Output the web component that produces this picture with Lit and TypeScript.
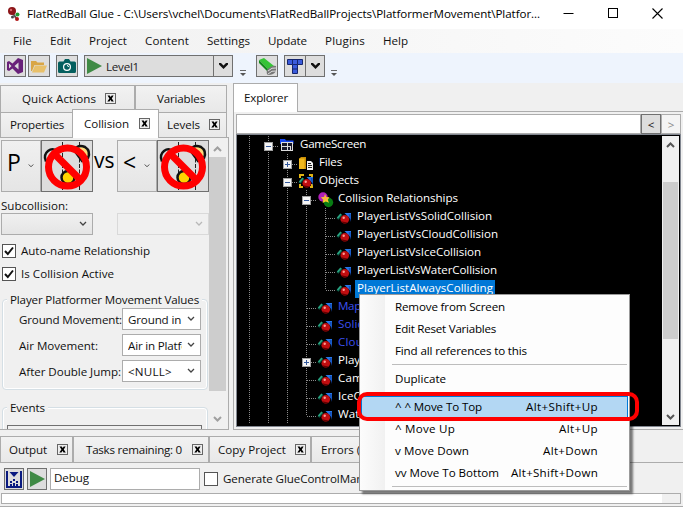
import { LitElement, html, css, svg, nothing } from "lit";
import { customElement, property } from "lit/decorators.js";

/** Text label that spreads its letters to fill an exact advance width. */
@customElement("fit-label")
class FitLabel extends LitElement {
  @property({ type: Number }) w = 0;
  @property() text = "";
  static styles = css`
    :host { display: inline-block; white-space: pre; flex: none; }
  `;
  updated() {
    const s = this.renderRoot.querySelector("span") as HTMLElement;
    s.style.letterSpacing = "0px";
    if (this.w) s.style.letterSpacing = (this.w - s.getBoundingClientRect().width) / this.text.length + "px";
  }
  render() {
    return html`<span>${this.text}</span>`;
  }
}

const t = (text: string, w = 0) => html`<fit-label .text=${text} .w=${w}></fit-label>`;

const chev = (c = "#444", w = 8) => html`<svg class="chev" width=${w} height="6" viewBox="0 0 8 6"><path d="M1 1L4 4L7 1" fill="none" stroke=${c} stroke-width="1.3"/></svg>`;
const arrow = (up: boolean, c: string) => html`<svg width="9" height="8" viewBox="0 0 9 8"><path d=${up ? "M1 6L4.500 2.500L8 6" : "M1 2L4.500 5.500L8 2"} fill="none" stroke=${c} stroke-width="2"/></svg>`;
const closeBox = html`<svg class="close" width="11" height="11" viewBox="0 0 11 11"><rect x=".5" y=".5" width="10" height="10" fill="#eee" stroke="#666"/><path d="M2.500 2.500h2.200l1 1.600 1-1.600h1.900L6.800 5.500l2 3H6.500l-1-1.700-1 1.700H2.300l2.100-3z" fill="#000"/></svg>`;
const play = html`<svg width="16" height="16" viewBox="0 0 16 16"><path d="M1 0L16 8L1 16z" fill="#3f8a45"/></svg>`;
const overflow = html`<svg class="ovf" width="6" height="7" viewBox="0 0 6 7"><path d="M0 .5h6" stroke="#666"/><path d="M0 3h6L3 6z" fill="#555"/></svg>`;

const banned = html`<svg width="46" height="50" viewBox="0 0 46 50">
  <path d="M18.500 1V50M35.500 1V50" stroke="#222" stroke-dasharray="4 1.500"/>
  <path d="M2 20.500Q-1 14 4 10Q9 6 14 11" fill="#ddd" stroke="#111" stroke-width="2.500"/>
  <path d="M30 9Q34 3 41 6Q47 10 44 17L38 20z" fill="#ffd97a" stroke="#111" stroke-width="2.500"/>
  <circle cx="24" cy="36.500" r="6.500" fill="#ffd500" stroke="#111" stroke-width="2.500"/>
  <circle cx="23.500" cy="26" r="19" fill="none" stroke="#f00" stroke-width="7"/>
  <path d="M10 12.500L37 39.500" stroke="#f00" stroke-width="7"/></svg>`;

const ballIcon = svg`
  <path d="M.5 9L4.500 4.500" stroke="#0b5540" stroke-width="2.600"/><path d="M.5 8L4 4" stroke="#2aa583" stroke-width="1.600"/>
  <path d="M7.500 3H14V9.500z" fill="#2878e8"/><path d="M11.500 4H13.700V12z" fill="#144fb8"/>
  <circle cx="7.800" cy="9.300" r="4.300" fill="#c00d10"/><path d="M4 11.300a4.300 4.300 0 0 0 6.500 1.300z" fill="#620000"/><circle cx="6.700" cy="7.800" r="1.200" fill="#ff9c93"/>`;
const icons: Record<string, unknown> = {
  ball: ballIcon,
  screen: svg`<path d="M0 1h5l1 1.500h7.500V6H0z" fill="#1747ef"/><rect x="1.500" y="4.500" width="11" height="8" fill="#16162a" stroke="#ddd"/><path d="M2 8.500h5M7.500 5v8M8 8.500h3M10.500 8v5" stroke="#ddd"/>`,
  files: svg`<path d="M0 3l2-2h5v12H0z" fill="#c98e05"/><path d="M0 2.500h5.500V13H0z" fill="#f0b81e"/><path d="M8 5h4l2 2v7H8z" fill="#f2f2f2"/><path d="M9 7.500h3M9 9.500h4M9 11.500h4" stroke="#222"/>`,
  objects: svg`<path d="M1 4V1h4M10 1h3v3M1 10v3h3M11 13h2v-3" fill="none" stroke="#e0b414" stroke-width="2"/>${ballIcon}`,
  rel: svg`<circle cx="5" cy="5" r="4.700" fill="#b01fb8"/><circle cx="10.500" cy="10.500" r="4.700" fill="#087c13"/><path d="M7 2l1.300 3 3.200.2-1.700 2.600 1.200 3-3.200-1.200-3.200 1.400.7-3.300-2.400-2.500 3.200-.2z" fill="#f3cb29"/><circle cx="7.300" cy="6.500" r="1.800" fill="#ffa84d"/>`,
};

/** One glyph per 19px tree column: | line, L last child, T child, + collapsed, - expanded. */
const cell = (k: string) => {
  const dash = (d: string) => svg`<path d=${d} stroke="#8a8a8a" stroke-dasharray="1 1" fill="none" shape-rendering="crispEdges"/>`;
  const box = k === "+" || k === "-";
  return html`<svg class="cell" width="19" height="18" viewBox="0 0 19 18">
    ${k === "|" || k === "T" || box ? dash("M9.500 0V18") : nothing}
    ${k === "L" ? dash("M9.500 0V10") : nothing}
    ${k !== "|" ? dash("M10 10.500H20") : nothing}
    ${box ? svg`<rect x="5.500" y="6.500" width="8" height="8" fill="#f4f4f4" stroke="#a0a0a0"/><path d=${k === "+" ? "M7 10.500h5M9.500 8v5" : "M7 10.500h5"} stroke="#33589c"/>` : nothing}
  </svg>`;
};

const rows: [string, string, string, number, string?][] = [
  ["|-", "screen", "GameScreen", 66],
  ["||+", "files", "Files", 23],
  ["||-", "objects", "Objects", 40],
  ["|||-", "rel", "Collision Relationships", 120],
  ["||||T", "ball", "PlayerListVsSolidCollision", 135],
  ["||||T", "ball", "PlayerListVsCloudCollision", 141],
  ["||||T", "ball", "PlayerListVsIceCollision", 124],
  ["||||T", "ball", "PlayerListVsWaterCollision", 140],
  ["||||L", "ball", "PlayerListAlwaysColliding", 136, "sel"],
  ["|||T", "ball", "Map", 23, "blue"],
  ["|||T", "ball", "SolidCollision", 73, "blue"],
  ["|||T", "ball", "CloudCollision", 79, "blue"],
  ["|||+", "ball", "PlayerList", 52],
  ["|||T", "ball", "Camera", 43],
  ["|||T", "ball", "IceCollision", 62],
  ["|||L", "ball", "WaterCollision", 78],
];

const menuItems: ([string, number, string?, number?, boolean?] | null)[] = [
  ["Remove from Screen", 110], ["Edit Reset Variables", 101], ["Find all references to this", 132], null,
  ["Duplicate", 51], null,
  ["^ ^ Move To Top", 87, "Alt+Shift+Up", 72, true], ["^ Move Up", 60, "Alt+Up", 39],
  ["v Move Down", 74, "Alt+Down", 55], ["vv Move To Bottom", 104, "Alt+Shift+Down", 87], null,
];

@customElement("app-root")
class AppRoot extends LitElement {
  static styles = css`
    :host { display: flex; flex-direction: column; position: relative; width: 683px; height: 507px; overflow: hidden;
      background: #f0f0f0; color: #111; font: 11.6px "Open Sans", "Noto Sans", sans-serif; }
    * { box-sizing: border-box; }
    svg { display: block; flex: none; overflow: visible; }
    .title { height: 29px; background: #fff; display: flex; align-items: center; padding: 0 20px 2px 7px; gap: 6px; flex: none; color: #000; }
    .title .win { margin-left: auto; display: flex; gap: 34px; }
    .menu { height: 24px; flex: none; display: flex; align-items: center; gap: 18px; padding: 0 13px 1px; background: linear-gradient(90deg, #f0f0f0, #fcfcfc); }
    .tools { height: 30px; flex: none; display: flex; padding: 2px 4px; background: #eef4fd; align-items: flex-start; }
    .tb { width: 22px; height: 22px; border: 1px solid #707070; background: #ddd; display: flex; align-items: center; justify-content: center; flex: none; }
    .tb.play { width: 130px; justify-content: flex-start; gap: 4px; padding-left: 1px; color: #222; }
    .tb.dd { width: 19px; border-left: 0; }
    .ovf { margin-top: 15px; }
    .main { display: flex; height: 351px; flex: none; }
    .left { width: 229px; display: flex; flex-direction: column; padding-top: 2px; margin-right: 4px; flex: none; }
    .tabs { display: flex; flex: none; }
    .tab { height: 27px; border: 1px solid #acacac; border-bottom: 0; background: linear-gradient(#f2f2f2, #e8e8e8); display: flex; align-items: center; flex: none; padding-bottom: 1px; }
    .low .tab { height: 25px; padding-bottom: 1px; }
    .low .tab.on { background: #fff; height: 29px; margin: -3px -1px -1px; position: relative; padding-bottom: 2px; }
    .lbody { flex: none; height: 293px; width: 229px; border: solid #acacac; border-width: 1px 1px 1px 0; display: flex; overflow: hidden; padding-right: 1px; }
    .lcol { width: 209px; padding: 2px 0 0 1px; overflow: hidden; display: flex; flex-direction: column; flex: none; }
    .sb { width: 17px; display: flex; flex-direction: column; align-items: center; }
    .sb .thumb { background: #cdcdcd; }
    .vs { display: flex; height: 52px; flex: none; }
    .btn { border: 1px solid #acacac; background: linear-gradient(#f0f0f0, #e5e5e5); display: flex; align-items: center; flex: none; }
    .big { width: 40px; height: 52px; font-size: 23px; padding-left: 5px; justify-content: space-between; padding-right: 6px; color: #000; }
    .big .clip { width: 13px; overflow: hidden; margin-top: -9px; }
    .img { width: 52px; height: 52px; border-color: #707070; background: #ddd; justify-content: center; }
    .vst { width: 24px; font-size: 21px; line-height: 40px; color: #000; padding-left: 1px; flex: none; }
    .sub { height: 21px; line-height: 28px; flex: none; }
    .pair { display: flex; gap: 24px; flex: none; height: 22px; }
    .pair .btn { width: 92px; justify-content: flex-end; padding-right: 5px; }
    .pair .off { border-color: #d9d9d9; background: #f0f0f0; width: 92px; }
    .chk { display: flex; align-items: center; gap: 5px; height: 23px; flex: none; }
    .cb { width: 14px; height: 14px; border: 1px solid #555; background: #fff; flex: none; }
    .group { margin: 0 1px; border: 1px solid #d5dfe5; border-radius: 4px; box-shadow: inset 0 0 0 1px #fff; flex: none; height: 91px; display: flex; flex-direction: column; gap: 4px; padding: 0 6px 0 14px; }
    .legend { height: 4px; margin: -2px 0 2px -10px; display: flex; align-items: center; flex: none; }
    .legend fit-label { background: #f0f0f0; padding: 0 3px; line-height: 16px; }
    .fld { display: flex; height: 22px; align-items: center; justify-content: space-between; flex: none; }
    .sel2 { width: 79px; height: 22px; border: 1px solid #acacac; background: #fff; display: flex; align-items: center; padding: 0 5px; flex: none; justify-content: space-between; }
    .sel2 .clip { width: 54px; overflow: hidden; display: flex; }
    .inner { height: 8px; border: 1px solid #707070; border-bottom: 0; margin: 9px -1px 0 -10px; flex: none; }
    .ex { width: 450px; display: flex; flex-direction: column; flex: none; height: 347px; }
    .extab { width: 65px; height: 29px; border: 1px solid #acacac; border-bottom: 0; background: #fff; display: flex; align-items: center; padding: 0 0 1px 10px; flex: none; position: relative; }
    .exbody { margin-top: -1px; height: 319px; border: 1px solid #acacac; border-right: 0; padding: 2px 1px 1px 2px; flex: none; }
    .search { display: flex; height: 20px; width: 445px; }
    .search .in { flex: 1; background: #fff; border: 1px solid #acacac; }
    .search .btn { width: 20px; justify-content: center; }
    .search .nav { border-color: #707070; background: #ddd; }
    .search .dis { color: #8a8a8a; background: #f4f4f4; }
    .tree { width: 445px; height: 293px; background: #000; border: 1px solid #828790; display: flex; color: #fff; padding-top: 1px; }
    .rows { width: 425px; padding-left: 3px; overflow: hidden; flex: none; }
    .row { display: flex; height: 18px; align-items: center; }
    .row .ic { margin: 2px 4px 0 2px; }
    .row .lab { line-height: 16px; height: 18px; }
    .row .sel { background: #0078d7; padding: 0 2px; margin-left: -2px; }
    .row .blue { color: #3c50f0; }
    .tree .sb { background: #f0f0f0; height: 289px; }
    .bot { flex: none; height: 73px; display: flex; flex-direction: column; padding-top: 2px; }
    .bot .tab { height: 26px; }
    .bbody { border-top: 1px solid #acacac; height: 45px; border-bottom: 1px solid #acacac; }
    .brow { display: flex; height: 22px; margin: 5px 0 0 4px; }
    .brow .in { width: 150px; border: 1px solid #acacac; background: #fff; margin: 0 4px 0 3px; padding-left: 3px; line-height: 18px; }
    .out { margin: 3px 2px 0 1px; border: 1px solid #acacac; background: #fff; height: 11px; display: flex; justify-content: flex-end; }
    .out i { width: 18px; background: #f0f0f0; }
    .ctx { position: absolute; left: 359px; top: 294px; width: 271px; height: 197px; border: 1px solid #9a9a9a; background: linear-gradient(90deg, #fcfcfc, #f1f1f1 25px, #fdfdfd 25px); box-shadow: 3px 3px 2px rgba(0,0,0,.5); padding: 1px 1px; color: #000; display: flex; flex-direction: column; }
    .mi { height: 22px; display: flex; align-items: center; justify-content: space-between; padding: 0 29px 2px 33px; border: 1px solid transparent; flex: none; }
    .mi.hot { border-color: #0078d7; background: #b3d7f3; }
    .sep { height: 1px; background: #bdbdbd; margin: 2px 1px 3px 31px; flex: none; }
    .ring { position: absolute; left: 357px; top: 392px; width: 282px; height: 29px; border: 4px solid #f00; border-radius: 10px; }
  `;

  render() {
    return html`
      <div class="title">
        <svg width="14" height="14" viewBox="0 0 14 14"><path d="M5 5L9 11" stroke="#555" stroke-width="2"/><circle cx="5" cy="4" r="4" fill="#8c1518"/><circle cx="4" cy="3" r="1.200" fill="#d8676a"/><circle cx="10.500" cy="7.500" r="2" fill="#1f9a30"/><circle cx="5.500" cy="10" r="1.500" fill="#444"/><circle cx="10" cy="12" r="2" fill="#b01515"/></svg>
        ${t("FlatRedBall Glue - C:\\Users\\vchel\\Documents\\FlatRedBallProjects\\PlatformerMovement\\Platfor...", 513)}
        <div class="win">
          <svg width="11" height="11" viewBox="0 0 11 11"><path d="M.5 5.500h10" stroke="#000"/></svg>
          <svg width="10" height="10" viewBox="0 0 10 10"><rect x=".5" y=".5" width="9" height="9" fill="none" stroke="#000"/></svg>
          <svg width="11" height="11" viewBox="0 0 11 11"><path d="M.5 .5l10 10M10.500 .5l-10 10" stroke="#000" stroke-width="1.100"/></svg>
        </div>
      </div>
      <div class="menu">
        ${t("File", 19)}${t("Edit", 21)}${t("Project", 38)}${t("Content", 44)}${t("Settings", 43)}${t("Update", 39)}${t("Plugins", 40)}${t("Help", 25)}
      </div>
      <div class="tools">
        <div class="tb"><svg width="16" height="16" viewBox="0 0 16 16"><path fill-rule="evenodd" d="M11 0l5 2v12l-5 2-5.500-5.500L2 13l-2-1V4l2-1 3.500 2.500zM11.500 4.500L7.500 8l4 3.500zM2 5.500v5L4.500 8z" fill="#68217a"/></svg></div>
        <div class="tb" style="margin-left:2px"><svg width="16" height="13" viewBox="0 0 16 13"><path d="M0 1h5l1.500 1.500H13V5H3.500L1 11H0z" fill="#d9a646"/><path d="M4 5.500h12L13 12.500H1z" fill="#e8c06a"/></svg></div>
        <div class="tb" style="margin-left:6px"><svg width="18" height="14" viewBox="0 0 18 14"><path d="M1.500 2.500h4L7 0h4l1.500 2.500h4Q18 2.500 18 4v8.500Q18 14 16.500 14h-15Q0 14 0 12.500V4q0-1.500 1.500-1.500z" fill="#045f5f"/><circle cx="9" cy="8" r="4" fill="#fff"/><circle cx="9" cy="8" r="2.800" fill="#045f5f"/><path d="M9 6.500q1.500 0 1.500 1.500" stroke="#fff" fill="none"/></svg></div>
        <div class="tb play" style="margin-left:6px">${play}${t("Level1", 33)}</div>
        <div class="tb dd"><svg width="9" height="6" viewBox="0 0 9 6"><path d="M0 0h2l2.500 2.500L7 0h2v1.500L4.500 6 0 1.500z" fill="#111"/></svg></div>
        <span style="width:7px"></span>${overflow}<span style="width:10px"></span>
        <div class="tb"><svg width="19" height="19" viewBox="0 0 19 19"><path d="M1 3l5-2 10 8-5 4z" fill="#35c436"/><path d="M1 3l10 10v3L1 6z" fill="#128a1b"/><path d="M9 13q5-5 9-4v5q-2 4-8 4-2-1-1-5z" fill="#777"/><path d="M10 14q4-4 8-3M10 17q4-4 8-3" stroke="#ddd" fill="none"/></svg></div>
        <div class="tb" style="margin-left:6px"><svg width="16" height="15" viewBox="0 0 16 15"><path d="M.5 .5h15v5h-5v9h-5v-9h-5z" fill="#3a5bdc" stroke="#14256e"/><path d="M5.500 .5v5h5v-5M5.500 10h5" fill="none" stroke="#14256e"/></svg></div>
        <div class="tb dd"><svg width="9" height="6" viewBox="0 0 9 6"><path d="M0 0h2l2.500 2.500L7 0h2v1.500L4.500 6 0 1.500z" fill="#111"/></svg></div>
        <span style="width:6px"></span>${overflow}
      </div>
      <div class="main">
        <div class="left">
          <div class="tabs">
            <div class="tab" style="width:135px;padding-left:21px;gap:9px">${t("Quick Actions", 74)}${closeBox}</div>
            <div class="tab" style="width:92px;padding-left:21px">${t("Variables", 48)}</div>
          </div>
          <div class="tabs low">
            <div class="tab" style="width:73px;padding-left:9px">${t("Properties", 54)}</div>
            <div class="tab on" style="width:87px;padding-left:11px;gap:10px">${t("Collision", 45)}${closeBox}</div>
            <div class="tab" style="width:69px;padding-left:8px;gap:9px">${t("Levels", 33)}${closeBox}</div>
          </div>
          <div class="lbody">
            <div class="lcol">
              <div class="vs">
                <div class="btn big"><div class="clip">P</div>${chev("#444", 6)}</div>
                <div class="btn img">${banned}</div>
                <div class="vst">vs</div>
                <div class="btn big"><div class="clip">&lt;</div>${chev("#444", 6)}</div>
                <div class="btn img">${banned}</div>
              </div>
              <div class="sub">${t("Subcollision:", 67)}</div>
              <div class="pair"><div class="btn">${chev()}</div><div class="btn off">${chev("#b8b8b8")}</div></div>
              <div style="height:4px;flex:none"></div>
              ${[["Auto-name Relationship", 129], ["Is Collision Active", 93]].map(([a, w]) => html`
                <div class="chk"><div class="cb" style="margin-left:1px"><svg width="12" height="12" viewBox="0 0 12 12"><path d="M2 6l2.800 3L10 2.500" stroke="#111" stroke-width="2" fill="none"/></svg></div>${t(a as string, w as number)}</div>`)}
              <div class="group" style="margin-top:14px">
                <div class="legend">${t("Player Platformer Movement Values", 189)}</div>
                ${([["Ground Movement:", 103, "Ground in ", 56], ["Air Movement:", 79, "Air in Platformer", 86], ["After Double Jump:", 102, "<NULL>", 44]] as [string, number, string, number][]).map(
                  ([a, w, b, v]) => html`<div class="fld"><span style="margin-left:2px;margin-right:-2px">${t(a, w)}</span><div class="sel2"><div class="clip">${t(b, v)}</div>${chev()}</div></div>`)}
              </div>
              <div class="group" style="margin-top:17px">
                <div class="legend">${t("Events", 35)}</div>
                <div class="inner"></div>
              </div>
            </div>
            <div class="sb">
              <div style="height:19px;padding-top:7px">${arrow(true, "#a0a0a0")}</div>
              <div class="thumb" style="width:17px;height:234px"></div>
              <div style="padding-top:24px">${arrow(false, "#a0a0a0")}</div>
            </div>
          </div>
        </div>
        <div class="ex">
          <div class="extab">${t("Explorer", 44)}</div>
          <div class="exbody">
            <div class="search"><div class="in"></div><div class="btn nav">&lt;</div><div class="btn dis">&gt;</div></div>
            <div class="tree">
              <div class="rows">
                ${rows.map(([c, ic, text, w, cls]) => html`<div class="row">${[...c].map(cell)}<svg class="ic" width="16" height="16" viewBox="0 0 16 16">${icons[ic]}</svg><span class="lab ${cls ?? ""}">${t(text, w)}</span></div>`)}
              </div>
              <div class="sb">
                <div style="height:46px;padding-top:5px">${arrow(true, "#555")}</div>
                <div class="thumb" style="width:15px;height:157px"></div>
                <div style="padding-top:74px">${arrow(false, "#555")}</div>
              </div>
            </div>
          </div>
        </div>
      </div>
      <div class="bot">
        <div class="tabs">
          <div class="tab" style="width:73px;padding-left:8px;gap:10px">${t("Output", 38)}${closeBox}</div>
          <div class="tab" style="width:136px;padding-left:12px;gap:10px">${t("Tasks remaining: 0", 96)}${closeBox}</div>
          <div class="tab" style="width:102px;padding-left:8px;gap:9px">${t("Copy Project", 68)}${closeBox}</div>
          <div class="tab" style="width:90px;padding-left:9px">${t("Errors (0)", 49)}</div>
        </div>
        <div class="bbody">
          <div class="brow">
            <div class="tb" style="width:20px"><svg width="16" height="17" viewBox="0 0 16 17"><path d="M1 0v16h14V0" fill="none" stroke="#0a1a80" stroke-width="2"/><path d="M3.500 1h9L8 6z" fill="#0a1a80"/><path d="M4 10h2v2H4zM7 8h2v2H7zM10 10h2v2h-2zM4 13h2v2H4zM7 12h2v3H7zM10 13h2v2h-2z" fill="#0a1a80"/></svg></div>
            <div class="tb" style="width:20px;margin-left:3px">${play}</div>
            <div class="in">${t("Debug", 35)}</div>
            <div class="chk" style="height:21px"><div class="cb"></div>${t("Generate GlueControlManager", 164)}</div>
          </div>
          <div class="out"><i></i></div>
        </div>
      </div>
      <div class="ctx">
        ${menuItems.map((m) => m ? html`<div class="mi ${m[4] ? "hot" : ""}">${t(m[0], m[1])}${m[2] ? t(m[2], m[3]) : nothing}</div>` : html`<div class="sep"></div>`)}
      </div>
      <div class="ring"></div>
    `;
  }
}
